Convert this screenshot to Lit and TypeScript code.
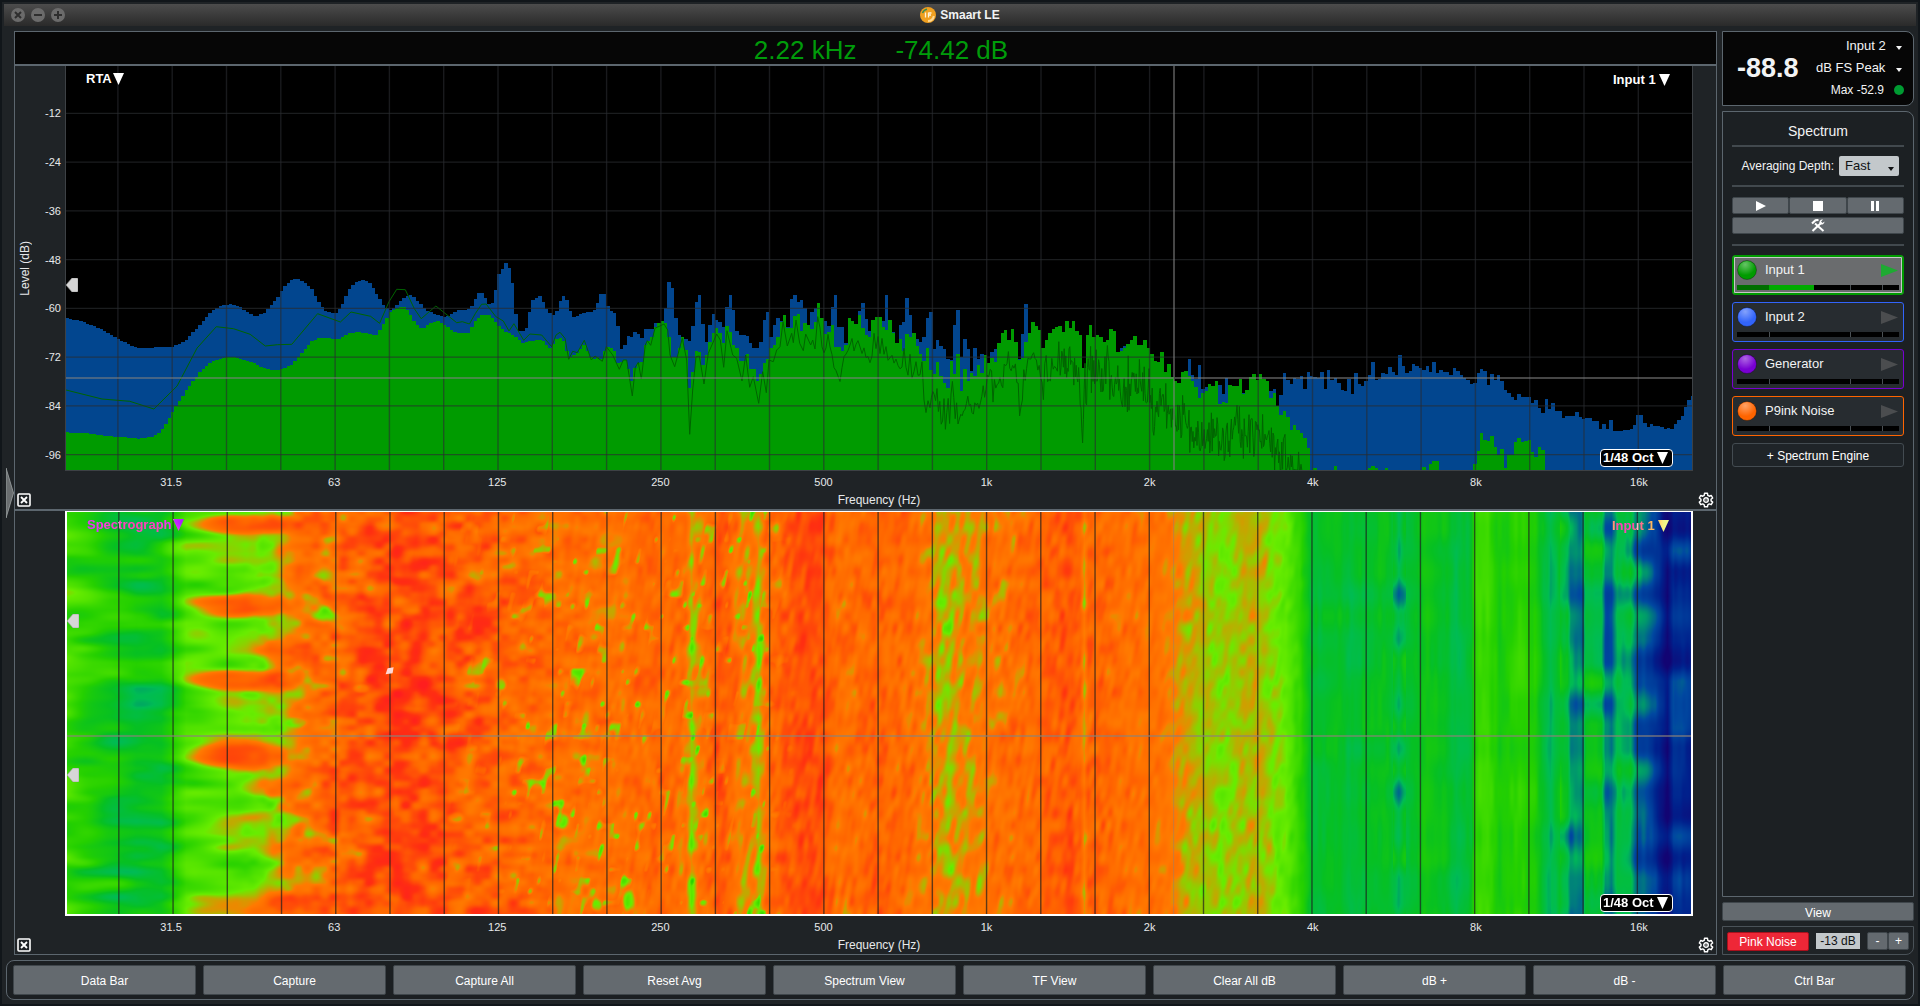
import { LitElement, html, svg, css } from "lit";
import { customElement, property, query } from "lit/decorators.js";
import { classMap } from "lit/directives/class-map.js";
import { styleMap } from "lit/directives/style-map.js";

type Pt = [number, number];

const OCTAVES = ["31.5", "63", "125", "250", "500", "1k", "2k", "4k", "8k", "16k"];
const LEVELS = [-12, -24, -36, -48, -60, -72, -84, -96];

// Plot canvas, in its own units: 20 Hz..20 kHz across, 0..-100 dB down.
const W = 1626;
const H = 404;
const OX = 66;
const OY = 66;
const BAR = 3.4;
const FIRST = -140;
const LAST = 339;

// Third-octave lines, 25 Hz first.
const THIRDS = Array.from({ length: 29 }, (_, k) => 51.9 + 54.3 * k);
const levelY = (db: number) => -1.4 - db * 4.0625;

function lerpAt(pts: Pt[], x: number): number {
  if (x <= pts[0][0]) return pts[0][1];
  for (let i = 1; i < pts.length; i++) {
    if (x <= pts[i][0]) {
      const [ax, ay] = pts[i - 1];
      const [bx, by] = pts[i];
      return ay + ((x - ax) / (bx - ax || 1)) * (by - ay);
    }
  }
  return pts[pts.length - 1][1];
}

function pairs(flat: number[], sx: number, ox: number, oy: number): Pt[] {
  const out: Pt[] = [];
  for (let i = 0; i < flat.length; i += 2) out.push([ox + flat[i] / sx, oy + flat[i + 1] / 3]);
  return out;
}

const LOW_PEAK = pairs([162,203,205,216,250,238,290,266,325,290,350,295,385,292,425,290,455,272,490,225,520,182,545,166,565,163,585,168,610,190,628,199,650,188,680,143,700,104,715,90,730,87,745,94,765,118,785,165,800,184,822,192,838,168,855,120,870,98,890,90,905,96,925,135,940,165,957,182,975,162,995,137,1010,136,1025,155,1045,180,1065,192,1095,202,1110,188,1125,180,1145,182,1158,165,1170,130,1184,130,1195,160,1205,165,1214,125,1222,74,1230,60,1238,37,1247,50,1256,95,1263,180,1271,243,1288,245,1296,195,1305,152,1320,139], 2.45, 0, 250);
const LOW_LIVE = pairs([162,547,215,550,260,558,345,566,375,560,395,545,415,505,435,462,460,415,490,367,520,333,550,322,580,322,610,333,640,350,665,360,690,358,715,345,740,310,765,273,785,262,830,268,850,252,875,245,900,250,925,256,940,220,955,188,975,172,987,168,1000,183,1018,218,1035,237,1050,224,1070,212,1090,225,1110,243,1125,249,1148,248,1165,212,1185,193,1200,195,1220,225,1240,245,1265,262,1283,280,1300,272,1325,271], 2.45, 0, 250);

// Bar tops from bar -1 upwards, in thirds of a unit below 280.
const PEAK_MID = [48,66,88,98,105,92,62,47,60,92,111,107,103,100,97,96,90,68,41,43,77,92,98,139,207,196,169,172,157,163,175,147,147,147,130,128,123,83,6,25,115,165,172,176,182,139,66,44,133,187,136,103,120,127,142,80,46,89,154,165,165,168,190,204,204,186,120,95,170,135,113,122,150,140,58,46,67,60,85,135,95,85,150,114,122,138,82,46,142,142,190,113,123,132,93,70,118,152,120,111,110,122,46,121,155,190,134,127,53,106,158,177,186,171,113,95,208,180,198,208,237,240,135,89,232,178,208,274,205,238,222,225,248,217,208,190,160,150,180,146,185,238,162,73];
const LIVE_MID = [180,184,194,203,192,178,173,184,213,230,224,220,207,195,213,230,236,232,238,213,200,203,214,250,246,240,266,303,264,250,246,195,182,172,140,128,123,130,170,232,232,205,172,210,323,276,214,216,256,226,186,160,143,159,189,138,156,195,204,243,243,222,266,268,303,282,250,238,205,196,172,125,106,145,145,107,103,152,128,134,147,125,70,114,162,155,135,200,200,212,195,113,122,132,105,144,166,171,120,111,110,142,151,121,158,190,176,213,162,170,158,198,222,242,205,269,282,246,288,308,325,242,283,222,333,266,302,279,287,255,280,226,248,233,245,190,160,150,180,146,185,240,233,185,158,127,138,151,203,179,159,147,142,138,156,124,144,122,153,164,264,166,135,170,165,172,185,181,147,153,216,213,203,192,181,169,196,196,181,203,222,243,245,216,276,252,290,303,308,276,273,288,302,320,353,338,332,312,318,302,372,367,370,315,318,318,298,343,330,292,281,299,283,297,303,355,340,378,404,394,411,450,436,450,459,474,504];
const PEAK_EXTRA: Record<number, number> = {170:205,171:197,190:236,191:286,192:297,193:256,194:328,195:322,199:316,200:342,201:295,206:338,214:334,215:328,217:345,218:279,219:300,220:313,221:295,222:297,223:287,224:328,225:276,226:288,227:290,228:293,229:276,230:328,231:269,232:300,233:294,234:310,235:330,236:333,237:297};
// Upper bands, in thirds of a unit below 250.
const PEAK_HIGH = [433,370,401,408,394,374,337,391,388,369,372,352,366,374,316,348,370,363,342,348,355,360,347,366,337,370,360,367,367,374,355,363,374,383,391,402,400,368,357,364,406,373,391,376,393,419,430,441,450,433,442,442,440,459,450,475,489,448,478,460,482,483,504,499,499,499,487,502,507,504,504,514,512,537,523,536,511,543,543,543,540,541,538,524,494,494,518,531,523,527,528,531,538,535,538,523,510,498,470,449,439,411];
const LIVE_HIGH: Record<number, number> = {227:655,233:648,243:654,244:648,245:654,248:654,259:652,261:643,262:634,263:634,274:641,275:603,276:548,277:570,278:574,279:558,280:590,281:615,282:598,283:655,284:614,285:614,286:577,287:565,288:575,289:573,290:569,291:605,292:621,293:591,294:600};

const barX = (k: number) => 541.67 + BAR * k;

function liveTop(k: number): number {
  if (k < -1) return lerpAt(LOW_LIVE, barX(k) + BAR / 2);
  if (k + 1 < LIVE_MID.length) return 280 + LIVE_MID[k + 1] / 3;
  return k in LIVE_HIGH ? 250 + LIVE_HIGH[k] / 3 : OY + H + 1;
}

function peakTop(k: number): number {
  if (k < -1) return lerpAt(LOW_PEAK, barX(k) + BAR / 2);
  if (k + 1 < PEAK_MID.length) return 280 + PEAK_MID[k + 1] / 3;
  if (k in PEAK_EXTRA) return 280 + PEAK_EXTRA[k] / 3;
  if (k >= 238) return 250 + PEAK_HIGH[k - 238] / 3;
  return liveTop(k);
}

function barsPath(top: (k: number) => number): string {
  let d = `M0 ${H}`;
  for (let k = FIRST; k <= LAST; k++) {
    const y = Math.round(top(k) - OY);
    d += `V${y}H${Math.min(W, Math.round(barX(k + 1) - OX))}`;
  }
  return `${d}V${H}Z`;
}

function randomSource(seed: number) {
  let s = seed;
  return () => {
    s = (s * 1664525 + 1013904223) >>> 0;
    return s / 4294967296;
  };
}

const TRACE_LOW = pairs([162,420,250,447,318,454,377,477,434,408,483,294,530,230,572,236,613,253,650,288,680,284,715,283,778,191,834,216,860,186,908,199,930,220,953,155,972,118,993,119,1015,176,1032,206,1068,168,1119,218,1133,215,1150,222,1165,190,1180,163,1191,162,1215,200,1233,213,1247,243,1259,221,1283,271,1298,252], 2.45, 0, 250);
const TRACE_MID = pairs([5,165,35,200,48,165,60,157,75,175,86,238,98,214,112,218,133,181,154,240,165,228,187,244,199,200,218,225,238,268,250,240,260,240,277,348,286,262,295,247,304,297,316,195,322,182,332,196,345,145,372,132,383,150,390,225,404,260,427,175,440,240,449,463,458,330,468,230,478,228,492,312,505,220,530,162,541,180,551,262,561,152,578,225,590,235,606,303,617,225,629,322,640,290,656,370,668,275,679,338,687,240,700,245,710,210,720,200,729,125,742,198,755,160,760,188,768,120,779,190,790,212,797,162,812,195,818,180,825,207,833,110], 3, 540, 280);
const TRACE_HIGH = pairs([25,130,34,190,45,235,55,170,64,210,73,270,93,280,105,250,118,165,130,205,145,180,160,215,180,235,195,175,210,185,225,210,250,230,280,270,305,230,335,290,345,350,370,350,390,360,407,440,425,330,452,420,470,370,490,400,512,350,530,310,555,330,575,260,605,240,622,300,632,385,642,300,670,220,700,290,730,260,780,230,808,290,817,480,826,300,840,260,870,275,900,280,930,330,970,300,1005,310,1025,370,1045,385,1070,360,1090,400,1125,415,1165,475,1210,450,1240,510,1280,430,1305,475,1340,425,1370,460,1400,520,1450,560,1480,572], 3, 810, 280);

function tracePath(): string {
  const rnd = randomSource(77);
  const pts: Pt[] = [...TRACE_LOW, ...TRACE_MID];
  for (let x = 820; x < 1302; x += x < 930 ? 2 : x < 1060 ? 1.4 : 0.8) {
    const amp = x < 900 ? 10 : x < 1080 ? 17 : 23;
    const n = rnd() + rnd() - 1;
    pts.push([x, lerpAt(TRACE_HIGH, x) + n * amp * 1.4]);
  }
  return pts.map(([x, y], i) => `${i ? "L" : "M"}${(x - OX).toFixed(1)} ${Math.min(H, y - OY).toFixed(1)}`).join("");
}

const PEAK_PATH = barsPath(peakTop);
const LIVE_PATH = barsPath(liveTop);
const TRACE_PATH = tracePath();

// Spectrograph intensity by horizontal position.
const HEAT: Pt[] = [[66,3.3],[105,2.8],[135,2.5],[160,2.6],[172,3],[185,3.5],[230,3.75],[262,3.85],[280,4.2],[296,4.6],[320,4.95],[350,5.4],[400,5.7],[440,5.5],[500,5.2],[560,4.95],[620,4.9],[660,5.2],[685,4.9],[691,4.15],[698,4.7],[706,4.9],[718,5.6],[732,5.1],[742,4.6],[750,4.7],[758,4.25],[766,5],[800,5.7],[823,5.7],[836,4.9],[880,5.3],[910,5],[930,4.7],[940,4.35],[948,4.25],[960,4.6],[978,4.5],[990,4.8],[1040,5.2],[1072,5.6],[1080,5.2],[1084,4.45],[1088,5.2],[1110,5.1],[1150,4.9],[1170,4.75],[1182,4.45],[1200,4.2],[1222,3.98],[1240,4.2],[1256,4.35],[1270,4.1],[1286,3.8],[1300,3.2],[1312,2.3],[1340,2.5],[1350,2.2],[1366,2.4],[1388,2.5],[1394,2.2],[1399,1.8],[1405,2.2],[1421,2.5],[1424,2.7],[1446,2.5],[1457,2.1],[1472,2.4],[1475,3.2],[1488,3.3],[1500,2.8],[1520,3.15],[1535,2.9],[1545,2.3],[1551,1.9],[1560,2.4],[1568,2.1],[1571,1.6],[1583,1.5],[1586,2.35],[1602,2.35],[1606,1.5],[1612,1.4],[1618,2.1],[1631,2.1],[1636,1.5],[1645,1.4],[1656,1],[1662,0.6],[1668,0.2],[1674,0.9],[1682,0.9],[1692,0.7]];
const RAMP: [number, number, number, number][] = [[0,18,4,115],[0.6,0,32,140],[1.2,0,72,160],[2,0,188,84],[2.5,6,192,34],[3,36,208,0],[3.9,104,236,0],[4.65,255,122,0],[5.2,255,102,0],[6.2,255,48,16],[6.9,255,30,30]];
const BLOBS: [number, number, number, number, number][] = [[242,524,54,9,1.5],[240,605,52,11,1.5],[240,680,52,10,1.7],[236,755,48,13,1.7],[250,905,62,13,1.4],[270,787,30,9,0.8],[285,650,28,14,0.7],[290,852,26,10,0.7],[323,614,12,9,-1.1],[295,722,10,5,-0.9],[283,820,16,8,-0.8],[560,820,7,8,-1.3],[500,684,5,6,-1.2],[360,688,7,4,-0.9],[455,817,7,5,-0.9],[628,900,6,10,-1.3],[596,905,5,6,-1.1],[390,680,30,24,0.5],[430,690,30,18,0.5],[480,625,18,9,0.6]];

function hash(x: number, y: number, seed: number): number {
  let h = (Math.imul(x, 374761393) + Math.imul(y, 668265263) + Math.imul(seed, 974634777)) | 0;
  h = Math.imul(h ^ (h >>> 13), 1274126177);
  return ((h ^ (h >>> 16)) >>> 0) / 4294967296;
}

function noise(x: number, y: number, seed: number): number {
  const xi = Math.floor(x);
  const yi = Math.floor(y);
  const fx = x - xi;
  const fy = y - yi;
  const u = fx * fx * (3 - 2 * fx);
  const v = fy * fy * (3 - 2 * fy);
  const a = hash(xi, yi, seed);
  const b = hash(xi + 1, yi, seed);
  const c = hash(xi, yi + 1, seed);
  const d = hash(xi + 1, yi + 1, seed);
  return (a + (b - a) * u + (c - a) * v + (a - b - c + d) * u * v) * 2 - 1;
}

const band = (x: number, a: number, b: number) => Math.max(0, Math.min(1, (x - a) / (b - a)));

function paintHeat(canvas: HTMLCanvasElement) {
  const ctx = canvas.getContext("2d");
  if (!ctx) return;
  const img = ctx.createImageData(canvas.width, canvas.height);
  const px = img.data;
  for (let cx = 0; cx < canvas.width; cx++) {
    const x = OX + (cx / canvas.width) * W;
    const base = lerpAt(HEAT, x);
    const wLow = 1 - band(x, 230, 330);
    const wMid = band(x, 230, 330) * (1 - band(x, 480, 680));
    const wHigh = band(x, 480, 680) * (1 - band(x, 1280, 1315));
    const calm = 1 - 0.45 * band(x, 1090, 1200);
    const wTop = band(x, 1280, 1315);
    const topAmp = x > 1560 ? 0.5 : x > 1393 && x < 1406 ? 0.6 : 0.15;
    const speck = band(x, 430, 540) * (1 - band(x, 760, 800));
    for (let cy = 0; cy < canvas.height; cy++) {
      const y = 512 + cy;
      let v = base;
      if (wLow > 0) v += wLow * (noise(x / 60, y / 13, 1) * 0.6 + noise(x / 28, y / 8, 2) * 0.3);
      if (wMid > 0) v += wMid * (noise((x + y * 0.3) / 17, y / 12, 3) * 0.75 + noise(x / 9, y / 7, 4) * 0.55);
      if (wHigh > 0) v += wHigh * calm * (noise((x + y * 0.16) / 5, y / 15, 5) * 0.42 + noise((x + y * 0.08) / 7, y / 11, 6) * 0.34);
      if (wTop > 0) v += wTop * (noise(x / 4, y / 44, 7) * 0.14 + noise(x / 40, y / 22, 8) * topAmp);
      if (speck > 0) v -= speck * Math.max(0, noise((x + y * 0.2) / 7, y / 11, 9) - 0.5) * 2.4;
      if (x < 660) {
        for (const [bx, by, rx, ry, s] of BLOBS) {
          const q = ((x - bx) / rx) ** 2 + ((y - by) / ry) ** 2;
          if (q < 4) v += s * Math.exp(-q * q * 0.8);
        }
      }
      let i = 1;
      while (i < RAMP.length - 1 && v > RAMP[i][0]) i++;
      const lo = RAMP[i - 1];
      const hi = RAMP[i];
      const t = Math.max(0, Math.min(1, (v - lo[0]) / (hi[0] - lo[0])));
      const o = (cy * canvas.width + cx) * 4;
      px[o] = lo[1] + (hi[1] - lo[1]) * t;
      px[o + 1] = lo[2] + (hi[2] - lo[2]) * t;
      px[o + 2] = lo[3] + (hi[3] - lo[3]) * t;
      px[o + 3] = 255;
    }
  }
  ctx.putImageData(img, 0, 0);
}

const triangle = html`<svg class="tri" viewBox="0 0 11 12" aria-hidden="true"><path d="M0 0H11L5.5 12Z" fill="currentColor"></path></svg>`;
const caret = html`<svg class="caret" viewBox="0 0 6 4" aria-hidden="true"><path d="M0 0H6L3 4Z" fill="currentColor"></path></svg>`;

@customElement("spectrum-chart")
export class SpectrumChart extends LitElement {
  @property() kind: "rta" | "spectrograph" = "rta";
  @query("canvas") canvas?: HTMLCanvasElement;

  static styles = css`
    :host { display: block; flex: 1 1 0; min-height: 0; font-family: "Liberation Sans", Arial, sans-serif; color: #e6e8ea; }
    .chart { height: 100%; display: grid; grid-template-columns: 50px minmax(0, 1fr) 23px; grid-template-rows: minmax(0, 1fr) 38px; }
    .scale { display: grid; grid-template-columns: 1fr auto; column-gap: 4px; padding-right: 4px; }
    .level { writing-mode: vertical-rl; transform: rotate(180deg); justify-self: start; align-self: center; font-size: 12px; line-height: 20px; }
    .dbs { display: grid; grid-template-rows: 47fr repeat(7, 49fr) 16fr; font-size: 11px; line-height: 12px; text-align: right; }
    .dbs::before, .ticks::before { content: ""; }
    .dbs span { transform: translateY(-50%); align-self: start; }
    .plot { position: relative; box-sizing: border-box; border: 1px solid #3d4145; border-top: 0; background: #000; min-width: 0; isolation: isolate; }
    .plot.heat { border: 2px solid #fff; border-top-width: 1px; }
    .art { position: absolute; inset: 0; width: 100%; height: 100%; display: block; }
    .pick { position: absolute; display: flex; align-items: center; gap: 3px; color: #fff; font-size: 13px; }
    .pick select { appearance: none; border: 0; margin: 0; padding: 0; background: transparent; color: inherit; font: bold 13px/16px "Liberation Sans", Arial, sans-serif; }
    .kind { left: 20px; top: 5px; gap: 1px; }
    .source { right: 22px; top: 6px; }
    .oct { right: 19px; bottom: 3px; padding: 0 4px 0 2px; background: #000; border: 1px solid #fff; border-radius: 4px; }
    .heat .oct { right: 18px; bottom: 2px; }
    .heat .kind, .heat .source { mix-blend-mode: difference; }
    .tri { width: 11px; height: 12px; display: block; }
    .tab { position: absolute; left: 0; width: 12px; height: 14px; margin-top: -7px; }
    .corner { align-self: end; border: 0; background: none; padding: 0; margin: 0 0 2px 2px; width: 14px; height: 14px; color: #fff; }
    .corner svg { display: block; width: 100%; height: 100%; }
    .gear { width: 16px; height: 16px; justify-self: start; margin: 0 0 1px 5px; }
    .axis { display: grid; grid-template-rows: 22px 16px; font-size: 11px; }
    .ticks { display: grid; grid-template-columns: 106fr repeat(9, 163fr) 54fr; align-items: center; line-height: 12px; }
    .ticks span { justify-self: start; transform: translateX(-50%); }
    .title { font-size: 12px; line-height: 14px; text-align: center; }
  `;

  firstUpdated() {
    if (this.canvas) paintHeat(this.canvas);
  }

  private pick(cls: string, label: string, value: string) {
    return html`<label class="pick ${cls}"><select aria-label=${label}><option>${value}</option></select>${triangle}</label>`;
  }

  private tab(top: number) {
    return html`<svg class="tab" style=${styleMap({ top: `${top}%` })} viewBox="0 0 12 14" aria-hidden="true">
      <path d="M0 7L6 0H11Q12 0 12 1V13Q12 14 11 14H6Z" fill="#d6d6d6" stroke="#999" stroke-width="0.6"></path>
    </svg>`;
  }

  private grid(color: string) {
    return svg`<g stroke=${color} stroke-width="1.4">${THIRDS.map((x) => svg`<path d="M${x.toFixed(1)} 0V${H}"></path>`)}</g>`;
  }

  render() {
    const rta = this.kind === "rta";
    return html`<section class="chart">
      <div class="scale">
        ${rta
          ? html`<div class="level">Level (dB)</div><div class="dbs">${LEVELS.map((l) => html`<span>${l}</span>`)}</div>`
          : null}
      </div>
      <div class=${classMap({ plot: true, heat: !rta })}>
        ${rta ? null : html`<canvas class="art" width="1624" height="402"></canvas>`}
        <svg class="art" viewBox="0 0 ${W} ${H}" preserveAspectRatio="none" aria-hidden="true">
          ${rta
            ? svg`<path d=${PEAK_PATH} fill="#02468f"></path><path d=${LIVE_PATH} fill="#009b00"></path>
                <path d=${TRACE_PATH} fill="none" stroke="#006400" stroke-width="1"></path>
                ${this.grid("rgba(42,44,48,0.6)")}
                <g stroke="rgba(42,44,48,0.65)" stroke-width="1.4">${LEVELS.map((l) => svg`<path d="M0 ${levelY(l)}H${W}"></path>`)}</g>
                <path d="M1108 0V${H}M0 312H${W}" stroke="rgba(128,128,128,0.55)" stroke-width="2"></path>`
            : svg`${this.grid("rgba(30,30,30,0.7)")}
                <path d="M0 225H${W}" stroke="rgba(140,130,120,0.6)" stroke-width="2"></path>
                <path d="M1108 0V${H}" stroke="rgba(140,130,120,0.5)" stroke-width="1"></path>
                <path d="M321 157L327 156L326 162L319 163Z" fill="#ffd8d8"></path>`}
        </svg>
        ${rta ? this.tab(54.2) : [this.tab(27), this.tab(65.5)]}
        ${this.pick("kind", "Graph type", rta ? "RTA" : "Spectrograph")}
        ${this.pick("source", "Source", "Input 1")}
        ${this.pick("oct", "Banding", "1/48 Oct")}
      </div>
      <span></span>
      <button class="corner" aria-label="Close graph">
        <svg viewBox="0 0 14 14"><rect x="1" y="1" width="12" height="12" rx="1" fill="none" stroke="currentColor" stroke-width="1.6"></rect><path d="M4 4L10 10M10 4L4 10" stroke="currentColor" stroke-width="1.8"></path></svg>
      </button>
      <div class="axis">
        <div class="ticks">${OCTAVES.map((o) => html`<span>${o}</span>`)}</div>
        <div class="title">Frequency (Hz)</div>
      </div>
      <button class="corner gear" aria-label="Graph settings">
        <svg viewBox="0 0 24 24" fill="none" stroke="currentColor" stroke-width="2.2" stroke-linejoin="round">
          <path d="M9.8 2h4.4l.5 3 2.2 1.3 2.9-1.1 2.2 3.8-2.4 1.9v2.4l2.4 1.9-2.2 3.8-2.9-1.1-2.2 1.3-.5 3H9.8l-.5-3-2.2-1.300-2.900 1.100L2 15.200l2.400-1.900v-2.400L2 9l2.200-3.800 2.900 1.100L9.300 5Z"></path>
          <circle cx="12" cy="12" r="3.400"></circle><circle cx="12" cy="12" r="1" fill="currentColor" stroke="none"></circle>
        </svg>
      </button>
    </section>`;
  }
}

interface Engine { name: string; color: string; active?: boolean }
const ENGINES: Engine[] = [
  { name: "Input 1", color: "#009b00", active: true },
  { name: "Input 2", color: "#3264fa" },
  { name: "Generator", color: "#7800d2" },
  { name: "P9ink Noise", color: "#ff6400" },
];
const COMMANDS = ["Data Bar", "Capture", "Capture All", "Reset Avg", "Spectrum View", "TF View", "Clear All dB", "dB +", "dB -", "Ctrl Bar"];

@customElement("app-root")
export class AppRoot extends LitElement {
  static styles = css`
    :host { display: block; font-family: "Liberation Sans", Arial, sans-serif; color: #f2f3f4; }
    * { box-sizing: border-box; }
    button, select, input { font-family: inherit; color: inherit; margin: 0; }
    .window { min-height: 100vh; display: flex; flex-direction: column; padding: 4px 6px 6px; background: #1f2326; box-shadow: inset 0 0 0 2px #11161a; }
    .bar { height: 22px; margin: 0 -2px; display: grid; grid-template-columns: 1fr auto 1fr; align-items: center; background: linear-gradient(#4c4c4c, #2a2a2a); }
    .lights { display: flex; gap: 6px; padding-left: 7px; }
    .lights button { width: 14px; height: 14px; border: 0; padding: 0; border-radius: 50%; background: #6b6b6b; }
    .lights svg { display: block; width: 14px; height: 14px; }
    .name { display: flex; align-items: center; gap: 4px; margin: 0; font-size: 12px; line-height: 16px; font-weight: bold; }
    .name svg { width: 16px; height: 16px; }
    .work { flex: 1; display: grid; grid-template-columns: 8px minmax(0, 1fr) 192px; padding-top: 5px; min-height: 0; }
    .handle { align-self: center; width: 8px; height: 50px; padding: 0; border: 0; background: none; }
    .handle svg { display: block; width: 8px; height: 50px; }
    .stage { display: flex; flex-direction: column; border: 1px solid #5c666e; margin-right: 5px; min-width: 0; }
    .readout { height: 32px; display: flex; justify-content: center; align-items: center; gap: 39px; padding: 4px 0 0 31px; background: #060606; color: #009b0a; font-size: 26px; line-height: 28px; }
    .stage spectrum-chart { border-top: 2px solid #5c666e; }
    .side { display: flex; flex-direction: column; }
    .meter { height: 75px; border: 1px solid #5c666e; border-radius: 0 8px 8px 0; background: #060606; display: grid; grid-template-columns: 1fr auto; align-items: center; padding: 0 9px 2px 14px; }
    .meter strong { font-size: 27px; line-height: 32px; }
    .rows { display: grid; gap: 4px; justify-items: end; font-size: 13px; line-height: 18px; }
    .row { display: flex; align-items: center; gap: 10px; }
    .row select { appearance: none; border: 0; background: none; padding: 0; font-size: 13px; line-height: 18px; }
    .caret { width: 6px; height: 4px; margin: 4px 2px 0 0; display: block; }
    .max { font-size: 12px; }
    .dot { width: 10px; height: 10px; border-radius: 50%; background: #009b32; }
    .panel { flex: 1; margin-top: 5px; padding: 10px 9px; border: 1px solid #5c666e; border-radius: 0 8px 0 0; background: #1c2023; }
    h2 { margin: 0 0 5px; font-size: 14px; line-height: 18px; font-weight: normal; text-align: center; }
    hr { margin: 0; border: 0; height: 2px; background: #42494e; }
    .depth { display: flex; align-items: center; justify-content: flex-end; gap: 5px; padding: 9px 5px; font-size: 12px; line-height: 20px; }
    .drop { width: 60px; height: 20px; border-radius: 2px; background: #c3c8cb; color: #101214; display: flex; align-items: center; justify-content: space-between; padding: 0 3px 0 6px; }
    .drop select { appearance: none; border: 0; padding: 0; background: none; font-size: 13px; line-height: 18px; }
    .drop .caret { margin-top: 5px; }
    .grey { border: 1px solid #3f464b; border-radius: 2px; background: #646a6f; padding: 2px 0 0; display: flex; align-items: center; justify-content: center; font-size: 12px; line-height: 14px; color: #fff; }
    .grey svg { display: block; }
    .transport { display: grid; grid-template-columns: repeat(3, 1fr); gap: 3px 0; padding: 10px 0; }
    .transport button { height: 17px; padding: 0; }
    .wide { grid-column: 1 / -1; }
    .engines { display: grid; gap: 7px; padding-top: 9px; }
    .engine { height: 40px; border: 1px solid; border-radius: 3px; background: #272c30; padding: 4px; display: grid; grid-template-columns: 20px 1fr 18px; grid-template-rows: 20px 5px; row-gap: 5px; column-gap: 8px; align-items: center; }
    .engine.active { background: #6a6c6e; box-shadow: inset 0 0 0 1px #009b00, inset 0 0 0 2px #c8c8c8; }
    .engine svg { display: block; }
    .engine button { border: 0; background: none; padding: 0; }
    .label { text-align: left; font-size: 13px; line-height: 20px; }
    .vu { grid-column: 1 / -1; height: 5px; display: grid; grid-template-columns: 33fr 81fr 32fr 16fr; gap: 1px; background: #4a5054; }
    .vu span { background: #000; }
    .active .vu span:nth-child(1) { background: #006e00; }
    .active .vu span:nth-child(2) { background: linear-gradient(90deg, #00aa00 56%, #000 56%); margin-left: -1px; }
    .add { height: 24px; width: 100%; border-color: #434b51; border-radius: 3px; background: #1f2428; }
    .view { height: 19px; margin: 5px 0; }
    .gen { height: 29px; border: 1px solid #4a5258; border-radius: 0 0 8px 0; display: grid; grid-template-columns: 82px 44px 1fr; gap: 7px; align-items: center; padding: 1px 4px 0; }
    .noise { height: 19px; border: 1px solid #a8101c; border-radius: 2px; background: #ee2737; color: #fff; font-size: 12px; line-height: 14px; padding: 1px 0 0; }
    .gen input { width: 44px; height: 16px; border: 0; padding: 0; text-align: center; background: #c3c8cb; color: #101214; font-size: 12px; line-height: 16px; }
    .step { display: grid; grid-template-columns: 1fr 1fr; }
    .step button { height: 18px; padding: 0; }
    .commands { display: grid; grid-template-columns: repeat(10, minmax(0, 1fr)); gap: 7px; margin-top: 5px; padding: 4px 7px 4px 6px; border: 1px solid #5c666e; border-radius: 8px; background: #1b1f22; }
    .commands button { height: 30px; }
  `;

  private sign(label: string, d: string) {
    return html`<button aria-label=${label}><svg viewBox="0 0 14 14"><path d=${d} stroke="#2e2e2e" stroke-width="2"></path></svg></button>`;
  }

  private engine(e: Engine, i: number) {
    const id = `ball${i}`;
    return html`<div class=${classMap({ engine: true, active: !!e.active })} style=${styleMap({ borderColor: e.color })}>
      <svg width="20" height="20" viewBox="0 0 20 20" aria-hidden="true">
        <defs><radialGradient id=${id} cx="0.4" cy="0.2" r="0.6"><stop offset="0" stop-color="#fff" stop-opacity="0.4"></stop><stop offset="1" stop-color="#fff" stop-opacity="0"></stop></radialGradient></defs>
        <circle cx="10" cy="10" r="9.5" fill=${e.color} stroke="rgba(0,0,0,0.3)"></circle>
        <circle cx="10" cy="10" r="9" fill="url(#${id})"></circle>
      </svg>
      <button class="label">${e.name}</button>
      <button aria-label="Run ${e.name}"><svg width="17" height="13" viewBox="0 0 17 13"><path d="M0 0L17 6.500L0 13Z" fill=${e.active ? "#1eaa32" : "#4b4d4f"}></path></svg></button>
      <div class="vu"><span></span><span></span><span></span><span></span></div>
    </div>`;
  }

  render() {
    return html`<main class="window">
      <header class="bar">
        <div class="lights">
          ${this.sign("Close", "M4 4L10 10M10 4L4 10")}${this.sign("Minimise", "M3 7H11")}${this.sign("Zoom", "M3 7H11M7 3V11")}
        </div>
        <h1 class="name">
          <svg viewBox="0 0 16 16" aria-hidden="true"><circle cx="8" cy="8" r="8" fill="#f0a020"></circle><path d="M2.500 6A6 6 0 0 1 7 2.200" fill="none" stroke="#3c8c50" stroke-width="1.500"></path><path d="M8 14A6 6 0 0 0 13.800 9" fill="none" stroke="#ffd890" stroke-width="2"></path><path d="M5.500 5.500V10.500M8.500 5.500V10.500M8.500 6H11.500M8.500 8H11" fill="none" stroke="#fff3d8" stroke-width="1.300"></path></svg>
          Smaart LE
        </h1>
      </header>
      <div class="work">
        <button class="handle" aria-label="Show data bar"><svg viewBox="0 0 8 50"><path d="M0 0L7.500 25L0 50Z" fill="#6a6e70" stroke="#a0a4a6" stroke-width="0.800"></path></svg></button>
        <section class="stage">
          <div class="readout"><span>2.22 kHz</span><span>-74.42 dB</span></div>
          <spectrum-chart kind="rta"></spectrum-chart>
          <spectrum-chart kind="spectrograph"></spectrum-chart>
        </section>
        <aside class="side">
          <div class="meter">
            <strong>-88.8</strong>
            <div class="rows">
              <label class="row"><select aria-label="Meter input"><option>Input 2</option></select>${caret}</label>
              <label class="row"><select aria-label="Meter scale"><option>dB FS Peak</option></select>${caret}</label>
              <div class="row max"><span>Max -52.9</span><span class="dot"></span></div>
            </div>
          </div>
          <div class="panel">
            <h2>Spectrum</h2>
            <hr />
            <div class="depth"><label for="depth">Averaging Depth:</label><span class="drop"><select id="depth"><option>Fast</option></select>${caret}</span></div>
            <hr />
            <div class="transport">
              <button class="grey" aria-label="Play"><svg width="10" height="10" viewBox="0 0 10 10"><path d="M0 0L10 5L0 10Z" fill="#fff"></path></svg></button>
              <button class="grey" aria-label="Stop"><svg width="10" height="10" viewBox="0 0 10 10"><path d="M0 0H10V10H0Z" fill="#fff"></path></svg></button>
              <button class="grey" aria-label="Pause"><svg width="8" height="10" viewBox="0 0 8 10"><path d="M0 0H3V10H0ZM5 0H8V10H5Z" fill="#fff"></path></svg></button>
              <button class="grey wide" aria-label="Settings"><svg width="14" height="13" viewBox="0 0 14 13"><path d="M4 4.500L12.500 12" stroke="#fff" stroke-width="2"></path><path d="M1 4.500L4.500 1.200L7.500 1" fill="none" stroke="#fff" stroke-width="2.200"></path><path d="M1.500 12L9.500 4.500" stroke="#fff" stroke-width="2"></path><path d="M12 0.500L10 2.500L11.500 4L13.500 2.500A3 3 0 0 1 8.800 5A3 3 0 0 1 12 0.500Z" fill="#fff"></path></svg></button>
            </div>
            <hr />
            <div class="engines">
              ${ENGINES.map((e, i) => this.engine(e, i))}
              <button class="grey add">+ Spectrum Engine</button>
            </div>
          </div>
          <button class="grey view">View</button>
          <div class="gen">
            <button class="noise">Pink Noise</button>
            <input aria-label="Generator level" value="-13 dB" />
            <div class="step"><button class="grey" aria-label="Level down">-</button><button class="grey" aria-label="Level up">+</button></div>
          </div>
        </aside>
      </div>
      <footer class="commands">${COMMANDS.map((c) => html`<button class="grey">${c}</button>`)}</footer>
    </main>`;
  }
}
